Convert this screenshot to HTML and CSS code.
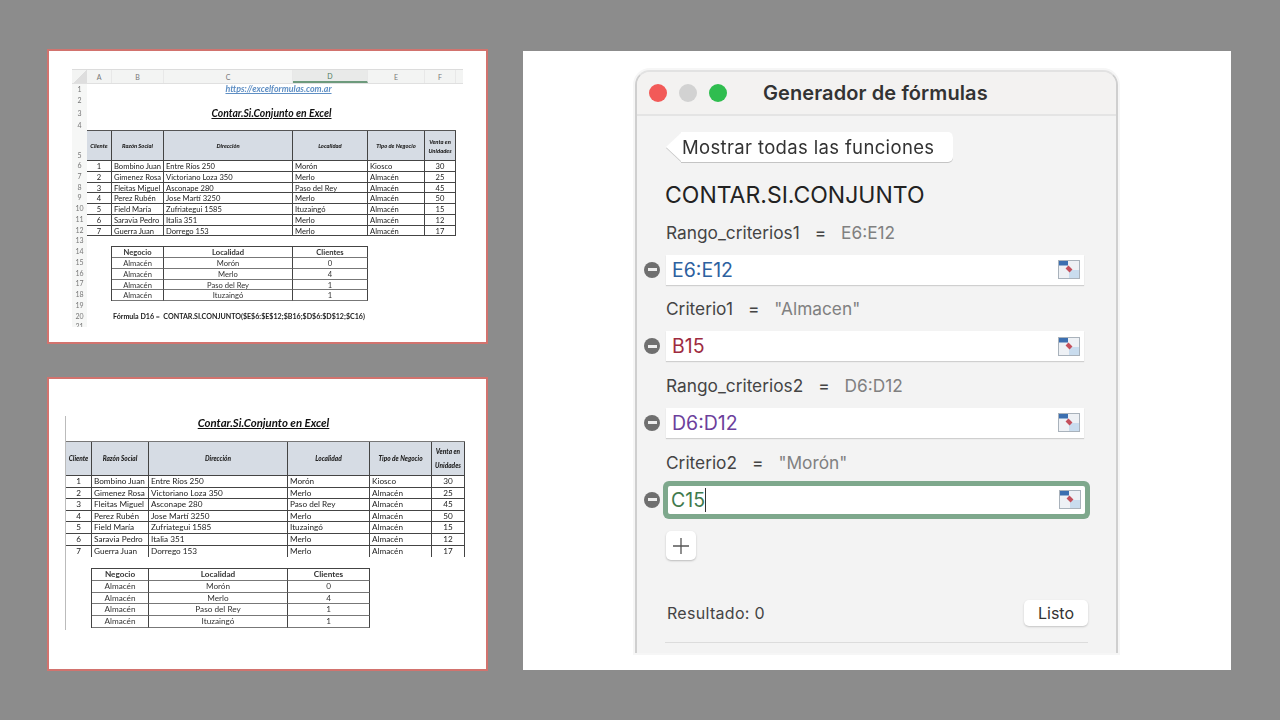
FILE: index.html
```html
<!DOCTYPE html>
<html lang="es">
<head>
<meta charset="utf-8">
<title>Contar.Si.Conjunto en Excel</title>
<link rel="stylesheet" href="styles.css">
</head>
<body>
<main class="stage">
  <div class="left">
    <section class="card card-top">
      <div class="sheet">
        <div class="colhead">
          <span class="corner"></span><span class="ch a">A</span><span class="ch b">B</span><span class="ch c">C</span><span class="ch d on">D</span><span class="ch e">E</span><span class="ch f">F</span><span class="ch rest"></span>
        </div>
        <div class="sheetbody">
          <div class="rownums">
            <span class="r11">1</span><span class="r11">2</span><span class="r14">3</span><span class="r10">4</span><span class="r30">5</span>
            <span>6</span><span>7</span><span>8</span><span>9</span><span>10</span><span>11</span><span>12</span><span>13</span><span>14</span><span>15</span><span>16</span><span>17</span><span>18</span><span>19</span><span>20</span><span>21</span>
          </div>
          <div class="content">
            <div class="link"><a>https://excelformulas.com.ar</a></div>
            <h2 class="title t1">Contar.Si.Conjunto en Excel</h2>
            <div class="grid main g1">
              <b>Cliente</b><b>Razón Social</b><b>Dirección</b><b>Localidad</b><b>Tipo de Negocio</b><b>Venta en Unidades</b>
              <span class="n">1</span><span>Bombino Juan</span><span>Entre Ríos 250</span><span>Morón</span><span>Kiosco</span><span class="n">30</span>
              <span class="n">2</span><span>Gimenez Rosa</span><span>Victoriano Loza 350</span><span>Merlo</span><span>Almacén</span><span class="n">25</span>
              <span class="n">3</span><span>Fleitas Miguel</span><span>Asconape 280</span><span>Paso del Rey</span><span>Almacén</span><span class="n">45</span>
              <span class="n">4</span><span>Perez Rubén</span><span>Jose Martí 3250</span><span>Merlo</span><span>Almacén</span><span class="n">50</span>
              <span class="n">5</span><span>Field María</span><span>Zufriategui 1585</span><span>Ituzaingó</span><span>Almacén</span><span class="n">15</span>
              <span class="n">6</span><span>Saravia Pedro</span><span>Italia 351</span><span>Merlo</span><span>Almacén</span><span class="n">12</span>
              <span class="n">7</span><span>Guerra Juan</span><span>Dorrego 153</span><span>Merlo</span><span>Almacén</span><span class="n">17</span>
            </div>
            <div class="grid small s1">
              <strong>Negocio</strong><strong>Localidad</strong><strong>Clientes</strong>
              <span>Almacén</span><span>Morón</span><span>0</span>
              <span>Almacén</span><span>Merlo</span><span>4</span>
              <span>Almacén</span><span>Paso del Rey</span><span>1</span>
              <span>Almacén</span><span>Ituzaingó</span><span>1</span>
            </div>
            <p class="formula">Fórmula D16 =&nbsp; CONTAR.SI.CONJUNTO($E$6:$E$12;$B16;$D$6:$D$12;$C16)</p>
          </div>
        </div>
      </div>
    </section>
    <section class="card card-bottom">
      <div class="sheet2">
        <h2 class="title t2">Contar.Si.Conjunto en Excel</h2>
        <div class="grid main g2">
          <b>Cliente</b><b>Razón Social</b><b>Dirección</b><b>Localidad</b><b>Tipo de Negocio</b><b>Venta en Unidades</b>
          <span class="n">1</span><span>Bombino Juan</span><span>Entre Ríos 250</span><span>Morón</span><span>Kiosco</span><span class="n">30</span>
          <span class="n">2</span><span>Gimenez Rosa</span><span>Victoriano Loza 350</span><span>Merlo</span><span>Almacén</span><span class="n">25</span>
          <span class="n">3</span><span>Fleitas Miguel</span><span>Asconape 280</span><span>Paso del Rey</span><span>Almacén</span><span class="n">45</span>
          <span class="n">4</span><span>Perez Rubén</span><span>Jose Martí 3250</span><span>Merlo</span><span>Almacén</span><span class="n">50</span>
          <span class="n">5</span><span>Field María</span><span>Zufriategui 1585</span><span>Ituzaingó</span><span>Almacén</span><span class="n">15</span>
          <span class="n">6</span><span>Saravia Pedro</span><span>Italia 351</span><span>Merlo</span><span>Almacén</span><span class="n">12</span>
          <span class="n last">7</span><span class="last">Guerra Juan</span><span class="last">Dorrego 153</span><span class="last">Merlo</span><span class="last">Almacén</span><span class="n last">17</span>
        </div>
        <div class="grid small s2">
          <strong>Negocio</strong><strong>Localidad</strong><strong>Clientes</strong>
          <span>Almacén</span><span>Morón</span><span>0</span>
          <span>Almacén</span><span>Merlo</span><span>4</span>
          <span>Almacén</span><span>Paso del Rey</span><span>1</span>
          <span>Almacén</span><span>Ituzaingó</span><span>1</span>
        </div>
      </div>
    </section>
  </div>

  <section class="shot">
    <div class="window">
      <header class="titlebar">
        <i class="light red"></i><i class="light grey"></i><i class="light green"></i>
        <h1>Generador de fórmulas</h1>
      </header>
      <div class="winbody">
        <button class="back">Mostrar todas las funciones</button>
        <h2 class="fn">CONTAR.SI.CONJUNTO</h2>

        <p class="label">Rango_criterios1<em>=</em><span>E6:E12</span></p>
        <div class="argrow"><i class="minus"></i><div class="field"><span class="blue">E6:E12</span>
          <svg class="pick" viewBox="0 0 22 19"><rect x=".5" y=".5" width="21" height="18" fill="#eef1f5" stroke="#a9b2bb"/><rect x="11" y="10" width="10" height="8" fill="#c9dcee"/><rect x="1" y="1" width="9" height="4.500" fill="#3c6fb0"/><path d="M9 7l4 4" stroke="#c4505c" stroke-width="4"/></svg></div></div>

        <p class="label">Criterio1<em>=</em><span>"Almacen"</span></p>
        <div class="argrow"><i class="minus"></i><div class="field"><span class="red-t">B15</span>
          <svg class="pick" viewBox="0 0 22 19"><rect x=".5" y=".5" width="21" height="18" fill="#eef1f5" stroke="#a9b2bb"/><rect x="11" y="10" width="10" height="8" fill="#c9dcee"/><rect x="1" y="1" width="9" height="4.500" fill="#3c6fb0"/><path d="M9 7l4 4" stroke="#c4505c" stroke-width="4"/></svg></div></div>

        <p class="label">Rango_criterios2<em>=</em><span>D6:D12</span></p>
        <div class="argrow"><i class="minus"></i><div class="field"><span class="purple">D6:D12</span>
          <svg class="pick" viewBox="0 0 22 19"><rect x=".5" y=".5" width="21" height="18" fill="#eef1f5" stroke="#a9b2bb"/><rect x="11" y="10" width="10" height="8" fill="#c9dcee"/><rect x="1" y="1" width="9" height="4.500" fill="#3c6fb0"/><path d="M9 7l4 4" stroke="#c4505c" stroke-width="4"/></svg></div></div>

        <p class="label">Criterio2<em>=</em><span>"Morón"</span></p>
        <div class="argrow focus"><i class="minus"></i><div class="field"><span class="green-t caret">C15</span>
          <svg class="pick" viewBox="0 0 22 19"><rect x=".5" y=".5" width="21" height="18" fill="#eef1f5" stroke="#a9b2bb"/><rect x="11" y="10" width="10" height="8" fill="#c9dcee"/><rect x="1" y="1" width="9" height="4.500" fill="#3c6fb0"/><path d="M9 7l4 4" stroke="#c4505c" stroke-width="4"/></svg></div></div>

        <button class="plus" aria-label="Agregar"><svg viewBox="0 0 18 18"><path d="M9 1v16M1 9h16" stroke="#555" stroke-width="1.300"/></svg></button>

        <div class="result"><span>Resultado: 0</span><button class="done">Listo</button></div>
        <hr class="rule">
      </div>
    </div>
  </section>
</main>
</body>
</html>
```
FILE: styles.css
```css
* { box-sizing: border-box; }
html, body { margin: 0; height: 100%; }
body { background: #8c8c8c; overflow: hidden; font-family: "Lato", "Liberation Sans", sans-serif; }
.stage { display: flex; align-items: flex-start; gap: 35px; padding: 49px 0 0 47px; }
.left { display: flex; flex-direction: column; gap: 33px; width: 441px; }
.card { background: #fff; border: 2px solid #d2736e; height: 295px; overflow: hidden; }
.card-bottom { height: 294px; }

/* sheet 1 */
.sheet { margin: 18px 0 0 23px; width: 391px; filter: blur(.35px); }
.colhead { display: flex; height: 15px; background: #f3f4f3; border-top: 1px solid #dcdcdc; border-bottom: 1px solid #e0e0e0; font-size: 7px; color: #777; }
.ch { display: flex; align-items: center; justify-content: center; border-right: 1px solid #e8e8e8; }
.corner { width: 15px; background: linear-gradient(135deg, #f3f4f3 50%, #dedede 50%); }
.a { width: 25px; } .b { width: 52px; } .c { width: 129px; } .d { width: 75px; } .e { width: 57px; } .f { width: 31px; } .rest { flex: 1; border: 0; }
.on { background: #e9eae9; border-bottom: 2px solid #6d9a7c; color: #4d7a5d; }
.sheetbody { display: flex; height: 243px; overflow: hidden; }
.rownums { width: 15px; flex: none; background: #f6f7f6; display: flex; flex-direction: column; font-size: 7px; color: #777; text-align: center; }
.rownums span { height: 10.75px; line-height: 10.75px; flex: none; }
.rownums .r11 { height: 11px; } .rownums .r14 { height: 14px; line-height: 15px; } .rownums .r10 { height: 10px; }
.rownums .r30 { height: 30px; line-height: 50px; }
.content { width: 369px; }
.link { height: 11px; padding-left: 14px; text-align: center; font-size: 8.900px; line-height: 10px; font-style: italic; font-weight: 700; color: #5f8fc4; }
.link a { text-decoration: underline; }
.title { margin: 0; text-align: center; font-style: italic; font-weight: 700; text-decoration: underline; color: #111; }
.t1 { margin-top: 11px; height: 24px; font-size: 10.400px; line-height: 14px; }

.grid { display: grid; color: #222; }
.grid > * { display: block; overflow: hidden; white-space: nowrap; }
.main b { display: flex; align-items: center; justify-content: center; background: #d6dce4; font-style: italic; font-weight: 900; text-align: center; white-space: normal; border-right: 1px solid #444; border-bottom: 1px solid #444; color: #222; }
.main span { border-right: 1px solid #444; border-bottom: 1px solid #444; padding-left: 2px; }
.main .n, .small span, .small strong { padding: 0; text-align: center; }
.g1 { grid-template-columns: 25px 52px 129px 75px 57px 31px; grid-template-rows: 30px repeat(7, 10.75px); font-size: 7.600px; line-height: 10px; border-top: 1px solid #555; border-left: 0; width: 369px; }
.g1 b { font-size: 5.800px; line-height: 9px; }
.small strong { font-weight: 700; }
.small > * { border-right: 1px solid #444; border-bottom: 1px solid #777; }
.s1 { margin: 10px 0 0 24px; grid-template-columns: 52px 129px 75px; grid-template-rows: repeat(5, 10.75px); font-size: 7.600px; line-height: 10px; width: 257px; border-top: 1px solid #444; border-left: 1px solid #444; color: #333; }
.formula { margin: 10.750px 0 0 26px; font-size: 7.100px; line-height: 10px; font-weight: 700; color: #222; white-space: nowrap; }

/* sheet 2 */
.sheet2 { margin: 37px 0 0 16px; width: 400px; height: 214px; border-left: 1px solid #bbb; filter: blur(.3px); }
.t2 { height: 25px; padding-right: 4px; font-size: 11.400px; line-height: 14px; }
.g2 { grid-template-columns: 26px 57px 139px 82px 62px 33px; grid-template-rows: 34px repeat(7, 11.600px); font-size: 8.200px; line-height: 11px; border-top: 1px solid #777; width: 399px; }
.g2 b { font-size: 6.500px; line-height: 14px; }
.g2 .last { border-bottom: 0; }
.s2 { margin: 11px 0 0 25px; grid-template-columns: 57px 139px 82px; grid-template-rows: repeat(5, 11.700px); font-size: 8.200px; line-height: 11px; width: 279px; border-top: 1px solid #444; border-left: 1px solid #444; color: #333; }

/* dialog */
.shot { background: #fff; width: 708px; height: 619px; margin-top: 2px; padding: 19px 0 0 112px; }
.window { width: 483px; height: 583px; overflow: hidden; background: #f3f3f3; border: 2px solid #cfcfcf; border-top-color: #e2e2e2; border-bottom: 0; border-radius: 15px 15px 0 0; font-family: "Inter", "Liberation Sans", sans-serif; box-shadow: 0 0 0 2px #f6f6f6; color: #2a2a2a; }
.titlebar { display: flex; align-items: center; height: 44px; padding-left: 12px; gap: 12px; background: #f3f2f1; border-bottom: 2px solid #e4e4e4; }
.light { width: 18px; height: 18px; border-radius: 50%; flex: none; }
.red { background: #f25a58; } .grey { background: #d2d2d2; } .green { background: #2fbd4f; }
.titlebar h1 { margin: 0 0 0 24px; font-size: 20px; font-weight: 600; color: #333; letter-spacing: .1px; }
.winbody { padding: 16px 0 0 7px; }
button { font-family: inherit; border: 0; background: #fff; color: #333; padding: 0; }
.back { position: relative; isolation: isolate; display: block; margin-left: 22px; width: 287px; height: 30px; background: none; font-size: 18.500px; text-align: left; padding-left: 16px; letter-spacing: .35px; filter: drop-shadow(0 1px .5px #c4c4c4); }
.back::before { content: ""; position: absolute; z-index: -1; left: 0; top: 0; width: 16px; height: 30px; background: #fff; clip-path: polygon(0 50%, 100% 0, 100% 100%); }
.back::after { content: ""; position: absolute; z-index: -1; left: 15px; right: 0; top: 0; bottom: 0; background: #fff; border-radius: 0 5px 5px 0; }
.fn { margin: 18px 0 0 21px; font-size: 23px; line-height: 30px; font-weight: 400; color: #222; }
.label { display: flex; align-items: center; margin: 12.200px 0 0 22px; height: 24px; font-size: 17.300px; color: #444; }
.label em { font-style: normal; margin: 0 15px; }
.label span { color: #808080; }
.fn + .label { margin-top: 10px; }
.argrow { display: flex; align-items: center; gap: 6px; margin-top: 10.500px; }
.minus { position: relative; width: 16px; height: 16px; border-radius: 50%; background: #6f6f6f; flex: none; }
.minus::after { content: ""; position: absolute; left: 3.500px; right: 3.500px; top: 6.500px; height: 3px; background: #eee; }
.field { display: flex; align-items: center; justify-content: space-between; width: 418px; height: 30px; background: #fff; padding: 0 4px 0 6px; font-size: 19.500px; box-shadow: 0 1px 1px #cfcfcf; }
.pick { width: 22px; height: 19px; display: block; }
.blue { color: #2d619f; } .red-t { color: #9e2b40; } .purple { color: #6c3f9c; } .green-t { color: #3f7a4d; }
.caret { border-right: 1.500px solid #333; line-height: 24px; }
.focus { margin-top: 11.500px; }
.focus .field { margin-left: 2px; width: 417px; height: 28px; padding-left: 3px; box-shadow: 0 0 0 5px #7ea88c; border-radius: 2px; }
.plus { display: flex; align-items: center; justify-content: center; margin: 17.500px 0 0 22px; width: 30px; height: 29px; border-radius: 5px; box-shadow: 0 1px 2px #bbb; }
.plus svg { width: 18px; height: 18px; }
.result { display: flex; align-items: center; justify-content: space-between; margin: 39.500px 28px 0 23px; height: 26px; font-size: 16px; color: #444; letter-spacing: .3px; }
.done { width: 64px; height: 26px; border-radius: 5px; font-size: 16px; box-shadow: 0 1px 2px #c4c4c4; }
.rule { margin: 16px 28px 0 21px; border: 0; border-top: 1px solid #dcdcdc; }
```
